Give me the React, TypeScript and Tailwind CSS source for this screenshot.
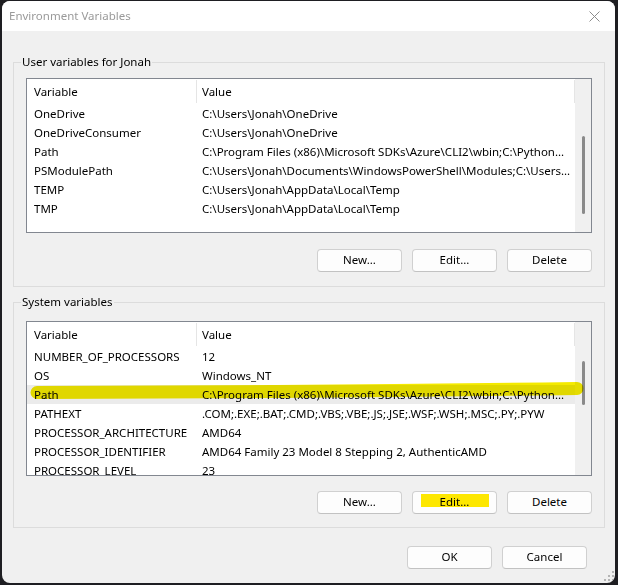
import React from "react"

type Row = [string, string]

const userVars: Row[] = [
  ["OneDrive", "C:\\Users\\Jonah\\OneDrive"],
  ["OneDriveConsumer", "C:\\Users\\Jonah\\OneDrive"],
  ["Path", "C:\\Program Files (x86)\\Microsoft SDKs\\Azure\\CLI2\\wbin;C:\\Python..."],
  ["PSModulePath", "C:\\Users\\Jonah\\Documents\\WindowsPowerShell\\Modules;C:\\Users..."],
  ["TEMP", "C:\\Users\\Jonah\\AppData\\Local\\Temp"],
  ["TMP", "C:\\Users\\Jonah\\AppData\\Local\\Temp"],
]

const systemVars: Row[] = [
  ["NUMBER_OF_PROCESSORS", "12"],
  ["OS", "Windows_NT"],
  ["Path", "C:\\Program Files (x86)\\Microsoft SDKs\\Azure\\CLI2\\wbin;C:\\Python..."],
  ["PATHEXT", ".COM;.EXE;.BAT;.CMD;.VBS;.VBE;.JS;.JSE;.WSF;.WSH;.MSC;.PY;.PYW"],
  ["PROCESSOR_ARCHITECTURE", "AMD64"],
  ["PROCESSOR_IDENTIFIER", "AMD64 Family 23 Model 8 Stepping 2, AuthenticAMD"],
  ["PROCESSOR_LEVEL", "23"],
]

function Btn({ children, highlight }: { children: React.ReactNode; highlight?: boolean }) {
  return (
    <button className="relative w-[85px] h-[23px] rounded-[4px] border border-[#d0d0d0] border-b-[#c2c2c2] bg-[#fdfdfd] text-[11.5px] text-black flex items-center justify-center">
      {highlight && (
        // yellow marker over the button label
        <span className="absolute left-[8px] top-[2px] w-[68px] h-[13px] bg-[#ffe900] mix-blend-multiply" />
      )}
      <span className="relative -mt-[1px]">{children}</span>
    </button>
  )
}

function VarList({
  rows,
  selected,
  thumbClass,
}: {
  rows: Row[]
  selected?: number
  thumbClass: string
}) {
  return (
    <div className="mx-[12px] h-[155px] border border-[#828790] bg-white flex overflow-hidden">
      <div className="flex-1 flex flex-col min-w-0">
        {/* Header */}
        <div className="h-[25px] flex shrink-0">
          <div className="w-[169px] pl-[7px] flex items-center">Variable</div>
          <div className="w-px my-[1px] bg-[#e5e5e5]" />
          <div className="flex-1 pl-[5px] flex items-center">Value</div>
          <div className="w-px my-[1px] bg-[#e5e5e5]" />
        </div>
        {rows.map(([name, value], i) => (
          <div
            key={name + i}
            className={
              "h-[19px] flex shrink-0 items-center whitespace-nowrap " +
              (i === selected ? "bg-[#ebebeb]" : "")
            }
          >
            <div className="w-[170px] pl-[7px] overflow-hidden">{name}</div>
            <div className="flex-1 pl-[5px] overflow-hidden">{value}</div>
          </div>
        ))}
      </div>
      {/* Scrollbar */}
      <div className="w-[16px] bg-[#f0f0f0] flex flex-col shrink-0">
        <div className={"ml-[7px] w-[3px] rounded-full bg-[#8a8a8a] " + thumbClass} />
      </div>
    </div>
  )
}

function GroupBox({
  label,
  className,
  innerClass,
  children,
}: {
  label: string
  className: string
  innerClass: string
  children: React.ReactNode
}) {
  return (
    <div className={"w-[592px] ml-[11px] border border-[#dcdcdc] flex flex-col " + className}>
      <span className="-mt-[9px] h-[16px] leading-[16px] ml-[7px] px-[1px] w-fit bg-[#f0f0f0]">
        {label}
      </span>
      <div className={"-mt-[7px] flex flex-col " + innerClass}>{children}</div>
    </div>
  )
}

export default function App() {
  return (
    <div
      className="relative w-[618px] h-[585px] bg-[#1e1e22] overflow-hidden text-[11.5px] text-black"
      style={{ fontFamily: '"Noto Sans", "Open Sans", sans-serif' }}
    >
      <div className="relative ml-[2px] mt-[1px] w-[613px] h-[582px] rounded-[8px] bg-[#f0f0f0] overflow-hidden flex flex-col">
        {/* Title bar */}
        <div className="h-[30px] bg-white flex items-center justify-between shrink-0">
          <span className="pl-[7px] text-[#9a9a9a] -mt-[1px]">Environment Variables</span>
          <svg width="11" height="11" viewBox="0 0 11 11" className="mr-[15px]">
            <path d="M0.5 0.5 L10.5 10.5 M10.5 0.5 L0.5 10.5" stroke="#8c8c8c" strokeWidth="1" />
          </svg>
        </div>

        <GroupBox label="User variables for Jonah" className="mt-[31px]" innerClass="pt-[15px] pb-[14px]">
          <VarList rows={userVars} thumbClass="mt-[57px] h-[78px]" />
          <div className="mt-[16px] mr-[12px] flex justify-end gap-[10px]">
            <Btn>New...</Btn>
            <Btn>Edit...</Btn>
            <Btn>Delete</Btn>
          </div>
        </GroupBox>

        <GroupBox label="System variables" className="mt-[15px]" innerClass="pt-[18px] pb-[13px]">
          <VarList rows={systemVars} selected={2} thumbClass="mt-[39px] h-[44px]" />
          <div className="mt-[15px] mr-[12px] flex justify-end gap-[10px]">
            <Btn>New...</Btn>
            <Btn highlight>Edit...</Btn>
            <Btn>Delete</Btn>
          </div>
        </GroupBox>

        <div className="mt-[18px] mr-[28px] flex justify-end gap-[10px]">
          <Btn>OK</Btn>
          <Btn>Cancel</Btn>
        </div>

        {/* Resize grip */}
        <svg width="10" height="10" viewBox="0 0 10 10" className="absolute right-[1px] bottom-[2px]">
          <g fill="#b4b4b4">
            <rect x="8" y="0" width="2" height="2" />
            <rect x="4" y="4" width="2" height="2" />
            <rect x="8" y="4" width="2" height="2" />
            <rect x="0" y="8" width="2" height="2" />
            <rect x="4" y="8" width="2" height="2" />
            <rect x="8" y="8" width="2" height="2" />
          </g>
        </svg>
      </div>

      {/* Highlighter stroke over the selected Path row */}
      <svg
        width="618"
        height="585"
        viewBox="0 0 618 585"
        className="absolute left-0 top-0 pointer-events-none mix-blend-multiply"
      >
        <path
          d="M37 392.5 Q 310 392 577 388.5"
          stroke="#f4ea00"
          strokeWidth="13"
          strokeLinecap="round"
          fill="none"
        />
      </svg>
    </div>
  )
}
